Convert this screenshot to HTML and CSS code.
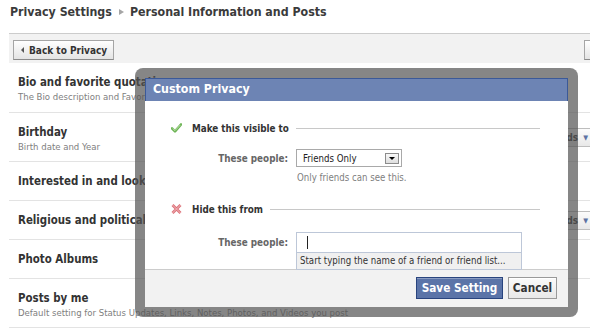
FILE: index.html
```html
<!DOCTYPE html>
<html lang="en">

<head>
    <meta charset="UTF-8">
    <meta name="viewport" content="width=device-width, initial-scale=1.0">
    <title>Privacy Settings</title>
    <link rel="stylesheet" href="styles.css">
</head>

<body>
    <div class="page">
        <h1 class="crumbs">Privacy Settings<span class="sep"></span>Personal Information and Posts</h1>
        <div class="toolbar">
            <button class="btn back"><span class="tri"></span>Back to Privacy</button>
            <button class="btn preview">Preview My Profile</button>
        </div>
        <ul class="settings">
            <li class="setting tall first">
                <div class="info">
                    <div class="name">Bio and favorite quotations</div>
                    <div class="desc">The Bio description and Favorite Quotations on your profile</div>
                </div>
            </li>
            <li class="setting tall">
                <div class="info">
                    <div class="name">Birthday</div>
                    <div class="desc">Birth date and Year</div>
                </div>
                <button class="audience">Friends <span class="arrow">&#9660;</span></button>
            </li>
            <li class="setting">
                <div class="info">
                    <div class="name">Interested in and looking for</div>
                </div>
            </li>
            <li class="setting">
                <div class="info">
                    <div class="name">Religious and political views</div>
                </div>
                <button class="audience">Friends <span class="arrow">&#9660;</span></button>
            </li>
            <li class="setting">
                <div class="info">
                    <div class="name">Photo Albums</div>
                </div>
            </li>
            <li class="setting tall">
                <div class="info">
                    <div class="name">Posts by me</div>
                    <div class="desc">Default setting for Status Updates, Links, Notes, Photos, and Videos you post</div>
                </div>
            </li>
        </ul>
    </div>

    <!-- finestra di dialogo sopra la pagina -->
    <div class="dialog">
        <div class="dialog-box">
            <div class="dialog-title">Custom Privacy</div>
            <div class="dialog-body">
                <div class="section">
                    <svg class="icon" width="11" height="10" viewBox="0 0 11 10">
                        <path d="M1 5.3 L4 8.3 L10 1.5" fill="none" stroke="#6db456" stroke-width="2.6" stroke-linecap="round" stroke-linejoin="round"/>
                        <path d="M1.6 5.4 L4 7.6 L9.4 1.9" fill="none" stroke="#d0ecbf" stroke-width="0.8"/>
                    </svg>
                    <span class="section-name">Make this visible to</span>
                </div>
                <div class="field">
                    <label>These people:</label>
                    <div class="select">
                        <span>Friends Only</span>
                        <span class="select-btn"></span>
                    </div>
                </div>
                <div class="hint">Only friends can see this.</div>

                <div class="section second">
                    <svg class="icon" width="11" height="10" viewBox="0 0 11 10">
                        <path d="M1.5 1 L9.5 9 M9.5 1 L1.5 9" fill="none" stroke="#dc7077" stroke-width="2.8"/>
                        <path d="M1.5 1 L9.5 9 M9.5 1 L1.5 9" fill="none" stroke="#f6cdd0" stroke-width="0.8"/>
                    </svg>
                    <span class="section-name">Hide this from</span>
                </div>
                <div class="field lower">
                    <label>These people:</label>
                    <div class="input">
                        <div class="suggest">Start typing the name of a friend or friend list...</div>
                    </div>
                </div>
            </div>
            <div class="dialog-footer">
                <button class="save">Save Setting</button>
                <button class="cancel">Cancel</button>
            </div>
        </div>
    </div>
</body>

</html>
```

FILE: styles.css
```css
html,
body {
    margin: 0;
    overflow: hidden;
    background: #fff;
}

body {
    font-family: "DejaVu Sans Condensed", "DejaVu Sans", sans-serif;
    font-size: 9.6px;
    color: #333;
    width: 590px;
    height: 332px;
    position: relative;
}

button {
    font-family: inherit;
    cursor: pointer;
}

.page {
    margin-left: 9px;
    width: 591px;
    overflow: hidden;
}

.crumbs {
    margin: 0;
    height: 33px;
    line-height: 24px;
    padding-left: 1px;
    font-size: 12.3px;
    font-weight: bold;
    color: #3b3b3b;
    white-space: nowrap;
    border-bottom: 1px solid #ccc;
}

.crumbs .sep {
    display: inline-block;
    margin: 0 6px 0 7px;
    vertical-align: 1px;
    border-top: 3px solid transparent;
    border-bottom: 3px solid transparent;
    border-left: 5px solid #a5a5a5;
}

.toolbar {
    background: #f2f2f2;
    height: 29px;
    box-sizing: border-box;
    padding: 6px 0 0 4px;
    display: flex;
    align-items: flex-start;
    justify-content: space-between;
}

.btn {
    font-size: 10px;
    font-weight: bold;
    color: #333;
    height: 20px;
    padding: 0 6px 0 7px;
    background: linear-gradient(#fff, #e4e4e4);
    border: 1px solid #a5a5a5;
    border-bottom-color: #8a8a8a;
    white-space: nowrap;
}

.btn .tri {
    display: inline-block;
    margin-right: 5px;
    vertical-align: 1px;
    border-top: 3px solid transparent;
    border-bottom: 3px solid transparent;
    border-right: 3px solid #555;
}

.btn.preview {
    width: 60px;
    margin-right: -44px;
    overflow: hidden;
}

.settings {
    list-style: none;
    margin: 0;
    padding: 0;
}

.setting {
    display: flex;
    align-items: flex-start;
    height: 39px;
    box-sizing: border-box;
    padding: 12px 5px 0 9px;
    border-bottom: 1px solid #e3e3e3;
}

.setting.tall {
    height: 49px;
}

.setting.first {
    height: 50px;
}

.name {
    font-size: 11.4px;
    font-weight: bold;
    line-height: 14px;
    white-space: nowrap;
}

.desc {
    color: #808080;
    font-size: 9.5px;
    line-height: 13px;
    margin-top: 1px;
    white-space: nowrap;
}

.audience {
    margin-left: auto;
    align-self: center;
    margin-top: -12px;
    height: 19px;
    padding: 0 6px;
    font-size: 9.8px;
    font-weight: bold;
    color: #333;
    background: linear-gradient(#fcfcfc, #e8e8e8);
    border: 1px solid #bdbdbd;
    white-space: nowrap;
}

.audience .arrow {
    color: #5c72a3;
    font-size: 7px;
    margin-left: 2px;
    vertical-align: 1px;
}

/* dialog */
.dialog {
    position: absolute;
    left: 135px;
    top: 68px;
    padding: 10px;
    background: rgba(82, 82, 82, 0.7);
    border-radius: 8px;
}

.dialog-box {
    width: 423px;
    background: #fff;
}

.dialog-title {
    height: 23px;
    box-sizing: border-box;
    line-height: 21px;
    padding-left: 7px;
    background: #6d84b4;
    border: 1px solid #3b5998;
    border-bottom: 0;
    color: #fff;
    font-size: 12.3px;
    font-weight: bold;
}

.dialog-body {
    height: 168px;
    box-sizing: border-box;
    padding: 20px 28px 0 26px;
}

.section {
    display: flex;
    align-items: center;
    height: 14px;
}

.section.second {
    margin-top: 18px;
}

.section::after {
    content: '';
    flex: 1;
    margin-left: 7px;
    border-top: 1px solid #c8c8c8;
}

.icon {
    margin-right: 10px;
    flex: none;
}

.section-name {
    font-size: 9.8px;
    font-weight: bold;
    color: #333;
}

.field {
    display: flex;
    align-items: center;
    margin-top: 14px;
}

.field.lower {
    margin-top: 16px;
}

.field label {
    width: 117px;
    margin-right: 8px;
    text-align: right;
    font-size: 9.8px;
    font-weight: bold;
    color: #666;
}

.select {
    width: 106px;
    height: 18px;
    box-sizing: border-box;
    border: 1px solid #a9a9a9;
    display: flex;
    align-items: center;
    justify-content: space-between;
    padding: 0 2px 0 6px;
    color: #222;
}

.select-btn {
    width: 14px;
    height: 11px;
    box-sizing: border-box;
    border: 1px solid #8c8c8c;
    background: linear-gradient(#f8f8f8, #dedede);
    position: relative;
}

.select-btn::after {
    content: '';
    position: absolute;
    left: 3px;
    top: 3px;
    border-left: 3px solid transparent;
    border-right: 3px solid transparent;
    border-top: 3px solid #000;
}

.hint {
    margin: 5px 0 0 126px;
    line-height: 12px;
    color: #808080;
}

.input {
    width: 226px;
    height: 21px;
    box-sizing: border-box;
    border: 1px solid #bdc7d8;
    position: relative;
}

.input::before {
    content: '';
    position: absolute;
    left: 10px;
    top: 3px;
    width: 1px;
    height: 13px;
    background: #222;
}

.suggest {
    position: absolute;
    top: 20px;
    left: -1px;
    right: -1px;
    height: 17px;
    box-sizing: border-box;
    padding-left: 3px;
    line-height: 15px;
    background: #f0f0f0;
    border: 1px solid #bdc7d8;
    border-top: 0;
    color: #333;
    white-space: nowrap;
}

.dialog-footer {
    height: 38px;
    box-sizing: border-box;
    border-top: 1px solid #ccc;
    background: #f2f2f2;
    padding: 7px 11px 0 0;
    display: flex;
    justify-content: flex-end;
    align-items: flex-start;
    gap: 5px;
}

.save,
.cancel {
    height: 22px;
    padding: 0;
    font-size: 11.7px;
    font-weight: bold;
}

.save {
    width: 87px;
    color: #fff;
    background: #5b74a8;
    border: 1px solid #29447e;
    box-shadow: inset 0 1px 0 #8a9cc2;
}

.cancel {
    width: 49px;
    color: #333;
    background: linear-gradient(#fafafa, #e8e8e8);
    border: 1px solid #999;
    box-shadow: inset 0 1px 0 #fff;
}
```
